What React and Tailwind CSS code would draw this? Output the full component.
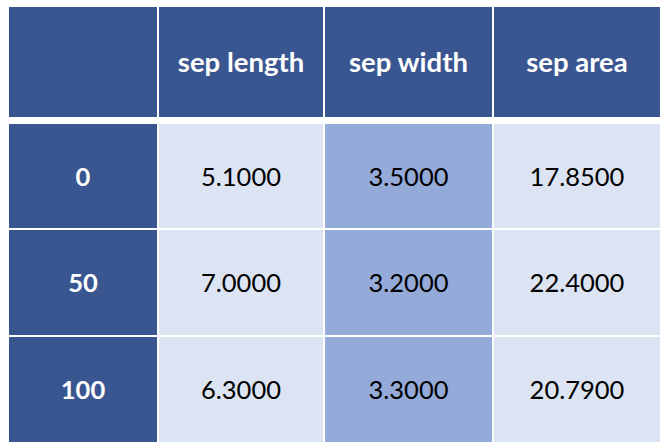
import React from 'react';

const headers = ['sep length', 'sep width', 'sep area'];
const rows = [
  { idx: '0', vals: ['5.1000', '3.5000', '17.8500'] },
  { idx: '50', vals: ['7.0000', '3.2000', '22.4000'] },
  { idx: '100', vals: ['6.3000', '3.3000', '20.7900'] },
];

const cols = 'grid grid-cols-[148px_164px_167px_166px] gap-x-[2px]';

export default function App() {
  return (
    <div className="w-[670px] h-[448px] bg-white pl-[9px] pt-[7px] font-['Lato','Noto_Sans',sans-serif]">
      {/* header */}
      <div className={`${cols} h-[110px]`}>
        <div className="bg-[#3a5691]" />
        {headers.map(h => (
          <div key={h} className="bg-[#3a5691] flex items-center justify-center text-white font-bold text-[27.5px] pb-[1px]">
            {h}
          </div>
        ))}
      </div>

      {/* body */}
      <div className="mt-[7px] flex flex-col gap-y-[2px]">
        {rows.map((r, i) => (
          <div key={r.idx} className={`${cols} ${i === 0 ? 'h-[104px]' : 'h-[105px]'}`}>
            <div className="bg-[#3a5691] flex items-center justify-center text-white font-bold text-[25.5px]">{r.idx}</div>
            {r.vals.map((v, j) => (
              <div
                key={j}
                className={`${j === 1 ? 'bg-[#94abd9]' : 'bg-[#dce3f2]'} flex items-center justify-center text-black text-[25.5px]`}
              >
                {v}
              </div>
            ))}
          </div>
        ))}
      </div>
    </div>
  );
}
